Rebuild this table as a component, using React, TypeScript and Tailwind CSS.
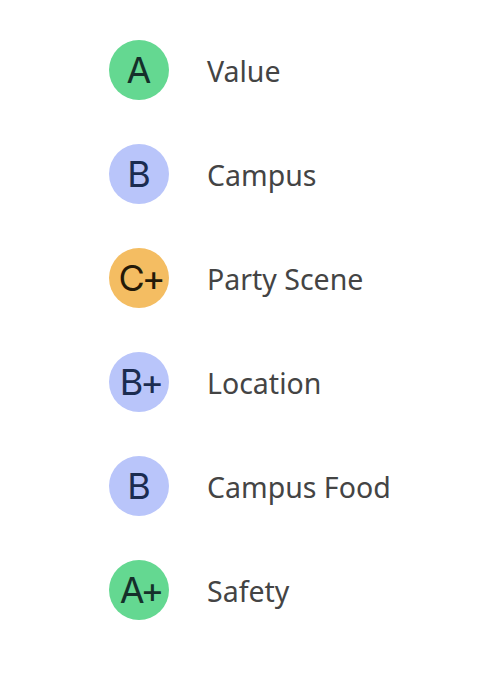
import React from "react";

type Item = { grade: string; label: string; bg: string; fg: string };

const items: Item[] = [
  { grade: "A", label: "Value", bg: "bg-[#64d891]", fg: "text-[#15302a]" },
  { grade: "B", label: "Campus", bg: "bg-[#b9c5fa]", fg: "text-[#1b2c50]" },
  { grade: "C+", label: "Party Scene", bg: "bg-[#f4bd62]", fg: "text-[#241a08]" },
  { grade: "B+", label: "Location", bg: "bg-[#b9c5fa]", fg: "text-[#1b2c50]" },
  { grade: "B", label: "Campus Food", bg: "bg-[#b9c5fa]", fg: "text-[#1b2c50]" },
  { grade: "A+", label: "Safety", bg: "bg-[#64d891]", fg: "text-[#15302a]" },
];

export default function App() {
  return (
    <div className="w-[496px] h-[674px] bg-white pt-[40px] pl-[109px] flex flex-col gap-[44px]">
      {items.map((it, i) => (
        <div key={i} className="flex items-center gap-[38px]">
          <div
            className={`w-[60px] h-[60px] rounded-full flex items-center justify-center ${it.bg} ${it.fg}`}
          >
            <span
              className={
                it.grade.length > 1
                  ? "text-[36px] leading-none font-normal tracking-[-3px] pl-[3px]"
                  : "text-[36px] leading-none font-normal"
              }
              style={{ fontFamily: "Inter, 'Noto Sans', sans-serif" }}
            >
              {it.grade}
            </span>
          </div>
          <span
            className="text-[28.5px] leading-none text-[#444444] translate-y-[1px]"
            style={{ fontFamily: "'Noto Sans', sans-serif" }}
          >
            {it.label}
          </span>
        </div>
      ))}
    </div>
  );
}
